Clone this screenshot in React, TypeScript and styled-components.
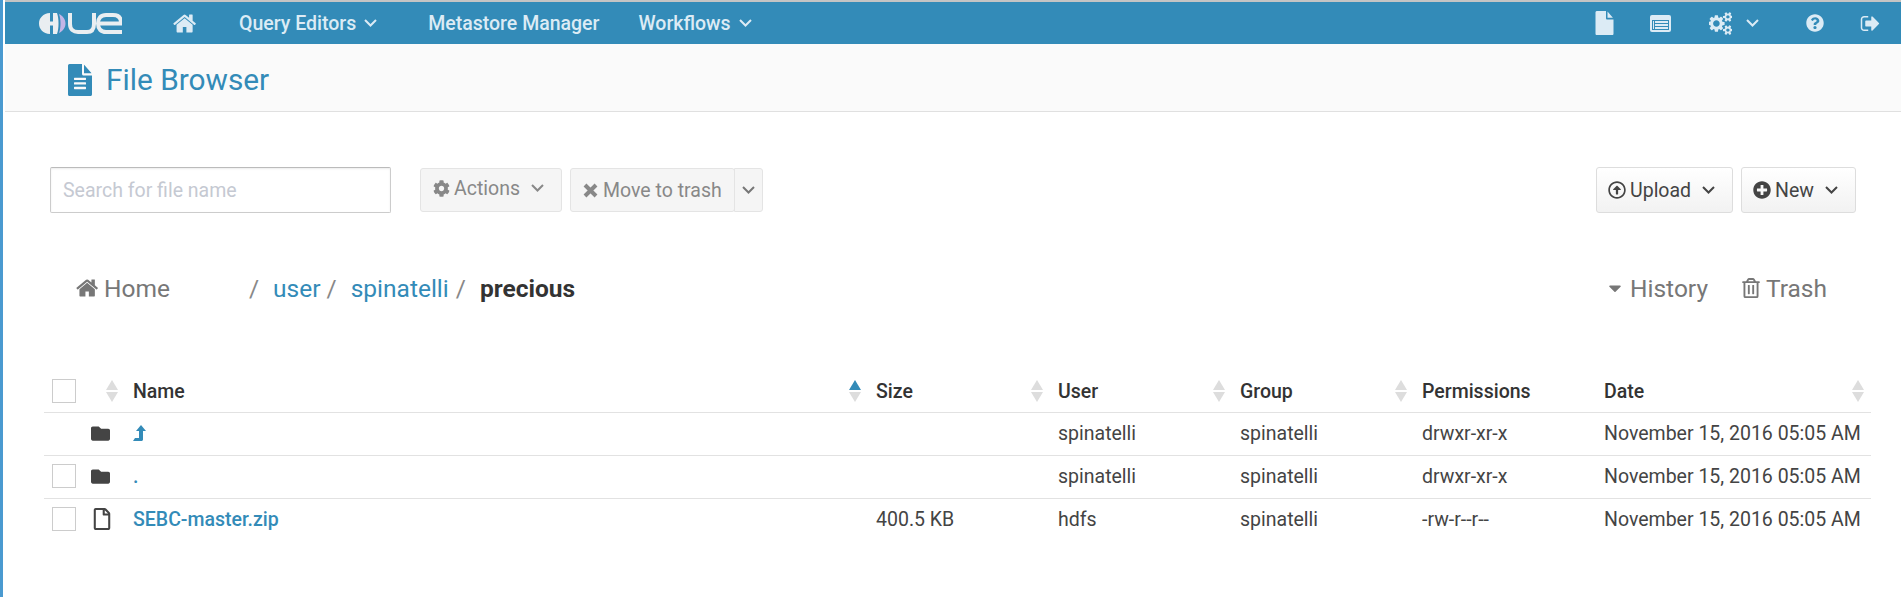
import React from 'react';
import styled, { createGlobalStyle } from 'styled-components';
import {
    FaCaretDown,
    FaCog,
    FaFolder,
    FaPlusCircle,
    FaQuestionCircle,
    FaRegArrowAltCircleUp,
    FaRegFile,
    FaRegTrashAlt,
} from 'react-icons/fa';

const HOME_PATH =
    'M1408 992v480q0 26-19 45t-45 19h-384v-384h-256v384h-384q-26 0-45-19t-19-45v-480q0-1 .5-3t.5-3l575-474 575 474q1 2 1 6zm223-69l-62 74q-8 9-21 11h-3q-13 0-21-7l-692-577-692 577q-12 8-24 7-13-2-21-11l-62-74q-8-10-7-23.5t11-21.5l719-599q32-26 76-26t76 26l244 204v-195q0-14 9-23t23-9h192q14 0 23 9t9 23v408l219 182q10 8 11 21.5t-7 23.5z';
const FILE_PATH =
    'M1152 512v-472q22 14 36 28l408 408q14 14 28 36h-472zm-128 32q0 40 28 68t68 28h544v1056q0 40-28 68t-68 28h-1344q-40 0-68-28t-28-68v-1600q0-40 28-68t68-28h800v544z';
const FILE_TEXT_PATH =
    'M1596 476q14 14 28 36h-472v-472q22 14 36 28zm-476 164h544v1056q0 40-28 68t-68 28h-1344q-40 0-68-28t-28-68v-1600q0-40 28-68t68-28h800v544q0 40 28 68t68 28zm160 736v-64q0-14-9-23t-23-9h-704q-14 0-23 9t-9 23v64q0 14 9 23t23 9h704q14 0 23-9t9-23zm0-256v-64q0-14-9-23t-23-9h-704q-14 0-23 9t-9 23v64q0 14 9 23t23 9h704q14 0 23-9t9-23zm0-256v-64q0-14-9-23t-23-9h-704q-14 0-23 9t-9 23v64q0 14 9 23t23 9h704q14 0 23-9t9-23z';
const COGS_PATH =
    'M832 896q0-106-75-181t-181-75-181 75-75 181 75 181 181 75 181-75 75-181zm768 512q0-52-38-90t-90-38-90 38-38 90q0 53 37.500 90.500t90.500 37.500 90.500-37.500 37.500-90.500zm0-1024q0-52-38-90t-90-38-90 38-38 90q0 53 37.500 90.500t90.500 37.500 90.500-37.500 37.500-90.500zm-384 421v185q0 10-7 19.500t-16 10.500l-155 24q-11 35-32 76 34 48 90 115 7 11 7 20 0 12-7 19-23 30-82.500 89.500t-78.500 59.500q-11 0-21-7l-115-90q-37 19-77 31-11 108-23 155-7 24-30 24h-186q-11 0-20-7.500t-10-17.500l-23-153q-34-10-75-31l-118 89q-7 7-20 7-11 0-21-8-144-133-144-160 0-9 7-19 10-14 41-53t47-61q-23-44-35-82l-152-24q-10-1-17-9.500t-7-19.500v-185q0-10 7-19.500t16-10.500l155-24q11-35 32-76-34-48-90-115-7-11-7-20 0-12 7-20 22-30 82-89t79-59q11 0 21 7l115 90q34-18 77-32 11-108 23-154 7-24 30-24h186q11 0 20 7.500t10 17.500l23 153q34 10 75 31l118-89q8-7 20-7 11 0 21 8 144 133 144 160 0 8-7 19-12 16-42 54t-45 60q23 48 34 82l152 23q10 2 17 10.500t7 19.500zm640 533v140q0 16-149 31-12 27-30 52 51 113 51 138 0 4-4 7-122 71-124 71-8 0-46-47t-52-68q-20 2-30 2t-30-2q-14 21-52 68t-46 47q-2 0-124-71-4-3-4-7 0-25 51-138-18-25-30-52-149-15-149-31v-140q0-16 149-31 13-29 30-52-51-113-51-138 0-4 4-7 4-2 35-20t59-34 30-16q8 0 46 46.500t52 67.500q20-2 30-2t30 2q51-71 92-112l6-2q4 0 124 70 4 3 4 7 0 25-51 138 17 23 30 52 149 15 149 31zm0-1024v140q0 16-149 31-12 27-30 52 51 113 51 138 0 4-4 7-122 71-124 71-8 0-46-47t-52-68q-20 2-30 2t-30-2q-14 21-52 68t-46 47q-2 0-124-71-4-3-4-7 0-25 51-138-18-25-30-52-149-15-149-31v-140q0-16 149-31 13-29 30-52-51-113-51-138 0-4 4-7 4-2 35-20t59-34 30-16q8 0 46 46.500t52 67.500q20-2 30-2t30 2q51-71 92-112l6-2q4 0 124 70 4 3 4 7 0 25-51 138 17 23 30 52 149 15 149 31z';
const SIGN_OUT_PATH =
    'M704 1440q0 4 1 20t.5 26.500-3 23.500-10 19.500-20.500 6.500h-320q-119 0-203.500-84.500t-84.500-203.500v-704q0-119 84.500-203.500t203.500-84.500h320q13 0 22.500 9.500t9.500 22.500q0 4 1 20t.5 26.500-3 23.500-10 19.500-20.500 6.500h-320q-66 0-113 47t-47 113v704q0 66 47 113t113 47h312l11.500 1 11.500 3 8 5.500 7 9 2 13.500zm928-544q0 26-19 45l-544 544q-19 19-45 19t-45-19-19-45v-288h-448q-26 0-45-19t-19-45v-384q0-26 19-45t45-19h448v-288q0-26 19-45t45-19 45 19l544 544q19 19 19 45z';

const GlobalStyle = createGlobalStyle`
    html, body {
        margin: 0;
        padding: 0;
        background: #fff;
    }
    body {
        font-family: Roboto, "Liberation Sans", sans-serif;
        color: #444;
    }
`;

const Page = styled.div`
    width: 1901px;
    height: 597px;
    overflow: hidden;
    box-sizing: border-box;
    border-left: 3px solid #4a9ad0;
    background: #fff;
`;

const NavBar = styled.nav`
    height: 44px;
    box-sizing: border-box;
    margin-left: 2px;
    border-top: 2px solid #c4c4c4;
    background: #338bb8;
    display: flex;
    align-items: center;
    padding: 0 20px 0 34px;
    color: #dcebf5;
`;

const Logo = styled.svg`
    width: 83px;
    height: 21px;
    margin-right: 51px;
    flex: none;
`;

const NavIconLink = styled.span`
    display: flex;
    align-items: center;
    margin-right: 41px;
`;

const NavLink = styled.span`
    display: flex;
    align-items: center;
    gap: 8px;
    font-size: 19.5px;
    font-weight: 500;
    margin-right: ${props => props.$gap}px;
`;

const NavSpacer = styled.div`
    flex: 1;
`;

const NavTool = styled.span`
    display: flex;
    align-items: center;
    font-size: ${props => props.$size || 20}px;
    margin-left: ${props => props.$gap}px;
`;

const Chevron = styled.svg`
    width: 13px;
    height: 8px;
    flex: none;
    fill: none;
    stroke: currentColor;
    stroke-width: 2;
`;

const FaGlyph = styled.svg`
    fill: currentColor;
    flex: none;
`;

const TitleBar = styled.header`
    height: 68px;
    margin-left: 2px;
    box-sizing: border-box;
    background: #fafafa;
    border-bottom: 1px solid #e0e0e0;
    display: flex;
    align-items: center;
    gap: 12px;
    padding: 4px 0 0 61px;
    color: #338bb8;
`;

const Title = styled.h1`
    margin: 0;
    font-size: 29.8px;
    font-weight: 400;
    line-height: 32px;
`;

const Toolbar = styled.div`
    display: flex;
    align-items: center;
    padding: 55px 45px 0 47px;
`;

const SearchInput = styled.input`
    width: 341px;
    height: 46px;
    box-sizing: border-box;
    border: 1px solid #ccc;
    border-top-color: #bbb;
    border-radius: 2px;
    padding: 0 12px;
    margin-right: 29px;
    font-family: inherit;
    font-size: 19.5px;
    box-shadow: inset 0 1px 2px rgba(0, 0, 0, 0.08);
    &::placeholder {
        color: #c5c9d2;
        opacity: 1;
    }
`;

const ToolButton = styled.span`
    height: 44px;
    box-sizing: border-box;
    display: flex;
    align-items: center;
    gap: ${props => props.$iconGap || 4}px;
    padding: 0 12px ${props => props.$lift || 0}px;
    border: 1px solid #e4e4e4;
    border-radius: 3px;
    background: #f5f5f5;
    color: #888;
    font-size: 19.5px;
    white-space: nowrap;
    margin-right: ${props => props.$gap || 0}px;
`;

const SplitCaret = styled(ToolButton)`
    padding: 0 7px;
    margin-left: -1px;
    border-radius: 0 3px 3px 0;
    color: #777;
`;

const ToolSpacer = styled.div`
    flex: 1;
`;

const ActionButton = styled.span`
    height: 46px;
    box-sizing: border-box;
    display: flex;
    align-items: center;
    gap: 4px;
    padding: 0 12px 0 11px;
    border: 1px solid #ddd;
    border-radius: 3px;
    background: linear-gradient(#fff, #f2f2f2);
    color: #444;
    font-size: 19.5px;
    margin-left: ${props => props.$gap || 0}px;
`;

const ButtonChevron = styled(Chevron)`
    margin: 0 5px 0 7px;
`;

const Crumbs = styled.div`
    display: flex;
    align-items: center;
    height: 34px;
    margin-top: 58px;
    padding: 0 74px 0 73px;
    font-size: 24.5px;
    color: #777;
`;

const HomeCrumb = styled.span`
    display: flex;
    align-items: center;
    gap: 4px;
    width: 173px;
`;

const Separator = styled.span`
    color: #888;
    margin-right: ${props => props.$gap}px;
`;

const CrumbLink = styled.span`
    color: #338bb8;
    margin-right: ${props => props.$gap}px;
`;

const CrumbCurrent = styled.span`
    color: #333;
    font-weight: 700;
`;

const CrumbAction = styled.span`
    display: flex;
    align-items: center;
    gap: 5px;
    margin-left: ${props => props.$gap || 0}px;
`;

const FileTable = styled.table`
    width: 1827px;
    margin: 56px 0 0 41px;
    border-collapse: collapse;
    table-layout: fixed;
    font-size: 19.5px;
    color: #444;
`;

const HeadCell = styled.th`
    height: 42px;
    padding: 9px 6px 0 8px;
    border-bottom: 1px solid #e2e2e2;
    font-weight: 500;
    font-size: 19.5px;
    text-align: left;
    color: #333;
`;

const HeadInner = styled.div`
    display: flex;
    align-items: center;
    justify-content: space-between;
`;

const Row = styled.tr`
    height: 43px;
    & + & td {
        border-top: 1px solid #e2e2e2;
    }
`;

const Cell = styled.td`
    padding: 0 0 2px 8px;
    white-space: nowrap;
`;

const IconCell = styled.div`
    display: flex;
    align-items: center;
    gap: 15px;
`;

const Check = styled.span`
    width: 24px;
    height: 24px;
    box-sizing: border-box;
    border: 1px solid #ccc;
    background: #fff;
    flex: none;
    visibility: ${props => (props.$hidden ? 'hidden' : 'visible')};
`;

const FileName = styled.span`
    color: #338bb8;
    font-weight: 500;
`;

const UpIcon = styled.svg`
    display: block;
    width: 13px;
    height: 16px;
    fill: currentColor;
`;

const TypeIcon = styled.span`
    display: flex;
    font-size: ${props => (props.$file ? 22 : 19)}px;
    color: #444;
`;

const SortIcon = styled.svg`
    width: 14px;
    height: 22px;
    flex: none;
`;

const Glyph = ({ d, width, height }: { d: string; width: number; height: number }) => (
    <FaGlyph width={width} height={height} viewBox="0 0 1792 1792" preserveAspectRatio="none">
        <path d={d} />
    </FaGlyph>
);

const HueLogo = () => (
    <Logo viewBox="0 0 83 21">
        <path d="M11 0C4 .5 0 5 0 10.500S4 20.500 11 21v-8.500h3V21h4c1-3 1.500-6 1.500-10.500S19 3 18 0h-4v8.500h-3z" fill="#e9eef1" />
        <path d="M20 1c4 2 6.500 5.500 6.500 9.500S24 18 20 20c1-3 1.500-6 1.500-9.500S21 4 20 1z" fill="#c4b5e6" />
        <path d="M31 0v11c0 5.500 3.500 8 8 8h9c4.500 0 7-2.500 7-8V0" fill="none" stroke="#e9eef1" strokeWidth="4" />
        <path d="M83 19H67c-5 0-8-3-8-8.500S62 2 67 2h7c5 0 8 2.500 8 7.500v1H60" fill="none" stroke="#e9eef1" strokeWidth="4" />
    </Logo>
);

const ChevronDown = () => (
    <Chevron viewBox="0 0 13 8">
        <path d="M1 1l5.500 5.500L12 1" />
    </Chevron>
);

const ButtonCaret = () => (
    <ButtonChevron viewBox="0 0 13 8">
        <path d="M1 1l5.500 5.500L12 1" />
    </ButtonChevron>
);

const Sort = ({ active }: { active?: boolean }) => (
    <SortIcon viewBox="0 0 14 22">
        <path d="M7 0l6 10H1z" fill={active ? '#338bb8' : '#ddd'} />
        <path d="M7 22l6-10H1z" fill="#ddd" />
    </SortIcon>
);

const TableIcon = () => (
    <svg width="21" height="17" viewBox="0 0 21 17">
        <rect width="21" height="17" rx="2" fill="#dcebf5" />
        <path d="M2 5h17v10H2z" fill="#338bb8" />
        <path d="M5 6h13v2H5zM5 9h13v2H5zM5 12h13v2H5zM3 6h1v8H3z" fill="#dcebf5" />
    </svg>
);

const CrossIcon = () => (
    <svg width="15" height="15" viewBox="0 0 15 15">
        <path d="M2 2l11 11M13 2L2 13" fill="none" stroke="currentColor" strokeWidth="4" />
    </svg>
);

const rows = [
    { up: true, size: '', user: 'spinatelli', permissions: 'drwxr-xr-x' },
    { name: '.', folder: true, size: '', user: 'spinatelli', permissions: 'drwxr-xr-x' },
    { name: 'SEBC-master.zip', size: '400.5 KB', user: 'hdfs', permissions: '-rw-r--r--' },
];

const App = () => (
    <Page>
        <GlobalStyle />
        <NavBar>
            <HueLogo />
            <NavIconLink>
                <Glyph d={HOME_PATH} width={25} height={25} />
            </NavIconLink>
            <NavLink $gap={51}>
                Query Editors <ChevronDown />
            </NavLink>
            <NavLink $gap={39}>Metastore Manager</NavLink>
            <NavLink $gap={0}>
                Workflows <ChevronDown />
            </NavLink>
            <NavSpacer />
            <NavTool $gap={0}>
                <Glyph d={FILE_PATH} width={21} height={24} />
            </NavTool>
            <NavTool $gap={35}>
                <TableIcon />
            </NavTool>
            <NavTool $gap={38}>
                <Glyph d={COGS_PATH} width={23} height={23} />
            </NavTool>
            <NavTool $gap={14}>
                <ChevronDown />
            </NavTool>
            <NavTool $size={18} $gap={47}>
                <FaQuestionCircle />
            </NavTool>
            <NavTool $gap={36}>
                <Glyph d={SIGN_OUT_PATH} width={21} height={21} />
            </NavTool>
        </NavBar>
        <TitleBar>
            <Glyph d={FILE_TEXT_PATH} width={28} height={32} />
            <Title>File Browser</Title>
        </TitleBar>
        <Toolbar>
            <SearchInput placeholder="Search for file name" readOnly />
            <ToolButton $gap={8} $lift={4}>
                <FaCog size={17} /> Actions
                <ButtonCaret />
            </ToolButton>
            <ToolButton $iconGap={5}>
                <CrossIcon /> Move to trash
            </ToolButton>
            <SplitCaret>
                <ChevronDown />
            </SplitCaret>
            <ToolSpacer />
            <ActionButton>
                <FaRegArrowAltCircleUp size={18} /> Upload
                <ButtonCaret />
            </ActionButton>
            <ActionButton $gap={8}>
                <FaPlusCircle size={18} /> New
                <ButtonCaret />
            </ActionButton>
        </Toolbar>
        <Crumbs>
            <HomeCrumb>
                <Glyph d={HOME_PATH} width={24} height={24} /> Home
            </HomeCrumb>
            <Separator $gap={14}>/</Separator>
            <CrumbLink $gap={6}>user</CrumbLink>
            <Separator $gap={14}>/</Separator>
            <CrumbLink $gap={7}>spinatelli</CrumbLink>
            <Separator $gap={14}>/</Separator>
            <CrumbCurrent>precious</CrumbCurrent>
            <ToolSpacer />
            <CrumbAction>
                <FaCaretDown size={20} /> History
            </CrumbAction>
            <CrumbAction $gap={33}>
                <FaRegTrashAlt size={20} /> Trash
            </CrumbAction>
        </Crumbs>
        <FileTable>
            <colgroup>
                <col width={81} />
                <col width={743} />
                <col width={182} />
                <col width={182} />
                <col width={182} />
                <col width={182} />
                <col width={275} />
            </colgroup>
            <thead>
                <tr>
                    <HeadCell>
                        <HeadInner>
                            <Check />
                            <Sort />
                        </HeadInner>
                    </HeadCell>
                    <HeadCell>
                        <HeadInner>
                            Name <Sort active />
                        </HeadInner>
                    </HeadCell>
                    {['Size', 'User', 'Group', 'Permissions', 'Date'].map(label => (
                        <HeadCell key={label}>
                            <HeadInner>
                                {label}
                                {label === 'Permissions' ? null : <Sort />}
                            </HeadInner>
                        </HeadCell>
                    ))}
                </tr>
            </thead>
            <tbody>
                {rows.map((row, index) => (
                    <Row key={index}>
                        <Cell>
                            <IconCell>
                                <Check $hidden={row.up} />
                                <TypeIcon $file={!row.up && !row.folder}>
                                    {row.up || row.folder ? <FaFolder /> : <FaRegFile />}
                                </TypeIcon>
                            </IconCell>
                        </Cell>
                        <Cell>
                            <FileName>
                                {row.up ? (
                                    <UpIcon viewBox="0 0 13 16">
                                        <path d="M8 0l5 6h-3v8.500c0 .8-.7 1.500-1.500 1.500H0l2-3h4V6H3z" />
                                    </UpIcon>
                                ) : (
                                    row.name
                                )}
                            </FileName>
                        </Cell>
                        <Cell>{row.size}</Cell>
                        <Cell>{row.user}</Cell>
                        <Cell>spinatelli</Cell>
                        <Cell>{row.permissions}</Cell>
                        <Cell>November 15, 2016 05:05 AM</Cell>
                    </Row>
                ))}
            </tbody>
        </FileTable>
    </Page>
);

export default App;
